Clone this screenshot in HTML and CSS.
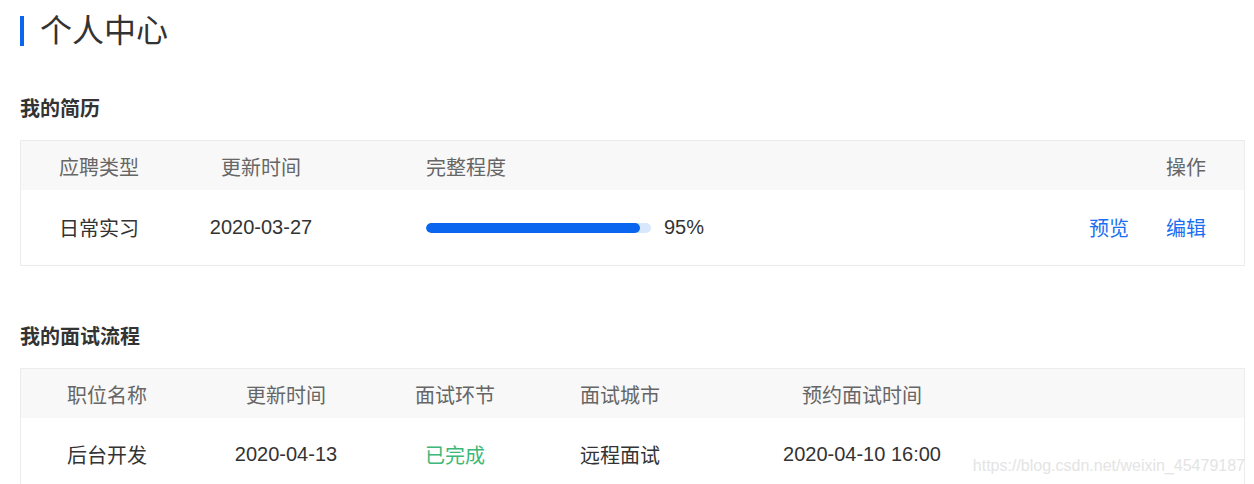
FILE: index.html
```html
<!DOCTYPE html>
<html lang="zh-CN">
<head>
    <meta charset="UTF-8">
    <title>个人中心</title>
    <link rel="stylesheet" href="styles.css">
</head>
<body>
    <div class="page">
        <!--标题-->
        <h1 class="page-title">个人中心</h1>

        <!--我的简历-->
        <h2 class="block-title">我的简历</h2>
        <div class="resume-table">
            <div class="row head">
                <div class="cell c1">应聘类型</div>
                <div class="cell c2">更新时间</div>
                <div class="cell c3">完整程度</div>
                <div class="cell ops">操作</div>
            </div>
            <div class="row body">
                <div class="cell c1">日常实习</div>
                <div class="cell c2 num">2020-03-27</div>
                <div class="cell c3">
                    <div class="progress"><div class="progress-bar" style="width: 95%"></div></div>
                    <span class="progress-text num">95%</span>
                </div>
                <div class="cell ops">
                    <a href="#" class="link">预览</a>
                    <a href="#" class="link">编辑</a>
                </div>
            </div>
        </div>

        <!--我的面试流程-->
        <h2 class="block-title second">我的面试流程</h2>
        <div class="interview-table">
            <div class="row head">
                <div class="cell">职位名称</div>
                <div class="cell">更新时间</div>
                <div class="cell">面试环节</div>
                <div class="cell">面试城市</div>
                <div class="cell">预约面试时间</div>
                <div class="cell"></div>
            </div>
            <div class="row body">
                <div class="cell">后台开发</div>
                <div class="cell num">2020-04-13</div>
                <div class="cell done">已完成</div>
                <div class="cell">远程面试</div>
                <div class="cell num">2020-04-10 16:00</div>
                <div class="cell"></div>
            </div>
        </div>
    </div>

    <span class="watermark">https://blog.csdn.net/weixin_45479187</span>
</body>
</html>
```

FILE: styles.css
```css
* {
    margin: 0;
    padding: 0;
    box-sizing: border-box;
}
html, body {
    height: 100%;
    overflow: hidden;
}
body {
    position: relative;
    font-family: "Liberation Sans", "Noto Sans CJK SC", sans-serif;
    color: #333;
    background: #fff;
}
a {
    text-decoration: none;
}
.page {
    padding: 16px 9px 0 20px;
}
.page-title {
    font-size: 32px;
    font-weight: normal;
    line-height: 30px;
    padding-left: 16px;
    border-left: 4px solid #0a66ee;
    color: #333;
}
.block-title {
    margin-top: 53px;
    font-size: 20px;
    line-height: 20px;
    font-weight: bold;
    color: #333;
}
.block-title.second {
    margin-top: 61px;
}

.resume-table,
.interview-table {
    margin-top: 21px;
    border: 1px solid #ececec;
    font-size: 20px;
}
.row {
    display: flex;
    align-items: center;
}
.row.head {
    height: 49px;
    background: #f8f8f8;
    color: #666;
    padding-top: 2px;
}
.row.body {
    height: 75px;
    color: #333;
}
.num {
    font-size: 20px;
}

/* 简历表格 */
.resume-table .c1 {
    width: 156px;
    text-align: center;
}
.resume-table .c2 {
    width: 168px;
    text-align: center;
}
.resume-table .c3 {
    flex: 1;
    margin-left: 81px;
    display: flex;
    align-items: center;
}
.resume-table .ops {
    display: flex;
    gap: 37px;
    padding-right: 38px;
}
.progress {
    width: 225px;
    height: 10px;
    border-radius: 5px;
    background: #d8e7fc;
    overflow: hidden;
}
.progress-bar {
    height: 100%;
    border-radius: 5px;
    background: #0a66ee;
}
.progress-text {
    margin-left: 13px;
}
.link {
    color: #1a6ff0;
}

/* 面试表格 */
.interview-table .cell {
    text-align: center;
}
.interview-table .cell:nth-child(1) { width: 172px; }
.interview-table .cell:nth-child(2) { width: 186px; }
.interview-table .cell:nth-child(3) { width: 152px; }
.interview-table .cell:nth-child(4) { width: 178px; }
.interview-table .cell:nth-child(5) { width: 306px; }
.interview-table .cell:nth-child(6) { flex: 1; }
.interview-table .row.body {
    padding-bottom: 2px;
}
.done {
    color: #3cb878;
}

.watermark {
    position: absolute;
    right: 9px;
    top: 457px;
    font-size: 16px;
    line-height: 18px;
    color: #e4e4e4;
}
```
